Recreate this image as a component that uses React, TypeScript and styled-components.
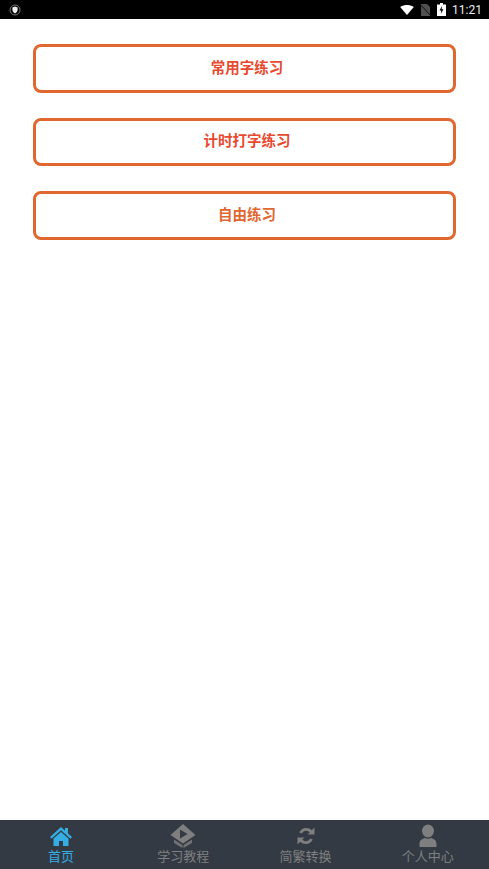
import React from "react";
import styled, { createGlobalStyle } from "styled-components";

const Global = createGlobalStyle`
  html, body { margin: 0; padding: 0; height: 100%; background: #fff; }
  #root { height: 100%; }
  * { box-sizing: border-box; }
`;

const Screen = styled.div`
  width: 489px;
  height: 869px;
  display: flex;
  flex-direction: column;
  font-family: "Roboto", "Noto Sans CJK SC", sans-serif;
  overflow: hidden;
`;

const StatusBar = styled.div`
  height: 19px;
  flex: none;
  background: #000;
  display: flex;
  align-items: center;
  justify-content: space-between;
  padding: 0 7px 0 9px;
`;

const StatusGroup = styled.div`
  display: flex;
  align-items: center;
  gap: 6px;
`;

const Clock = styled.span`
  color: #eeeeee;
  font-size: 12px;
  font-family: "Roboto", sans-serif;
  font-weight: 400;
`;

const Main = styled.main`
  flex: 1;
  background: #fff;
  padding: 25px 33px 0;
  display: flex;
  flex-direction: column;
  gap: 25px;
`;

const PracticeButton = styled.button<{ $color: string }>`
  height: 48.5px;
  border: 3px solid #e0672f;
  border-radius: 8px;
  background: #fff;
  color: ${(p) => p.$color};
  font: 700 14.5px "Noto Sans CJK SC", sans-serif;
  padding: 0 0 4px 5px;
`;

const TabBar = styled.nav`
  height: 49px;
  flex: none;
  background: #333a44;
  display: grid;
  grid-template-columns: repeat(4, 1fr);
`;

const Tab = styled.div<{ $active?: boolean }>`
  display: flex;
  flex-direction: column;
  align-items: center;
  color: ${(p) => (p.$active ? "#34aee3" : "#7f7f7f")};
  padding-top: 4px;
`;

const TabIcon = styled.svg`
  width: 26px;
  height: 24px;
  display: block;
  fill: currentColor;
`;

const TabLabel = styled.span`
  font: 400 13px/18px "Noto Sans CJK SC", sans-serif;
  margin-top: -1px;
`;

const buttons = [
  { label: "常用字练习", color: "#e8492f" },
  { label: "计时打字练习", color: "#e8492f" },
  { label: "自由练习", color: "#e0652f" },
];

export default function App() {
  return (
    <Screen>
      <Global />
      <StatusBar>
        <svg width="12" height="12" viewBox="0 0 12 12">
          <circle cx="6" cy="6" r="5" fill="none" stroke="#777" strokeWidth="1" />
          <path d="M3.4 3.4 6 2.6l2.6.8V6c0 1.6-1.2 2.7-2.6 3.4C4.600 8.700 3.400 7.600 3.400 6z" fill="#eee" />
        </svg>
        <StatusGroup>
          <svg width="14" height="10" viewBox="0 0 15 11">
            <path d="M0 2.200C4-.8 11-.8 15 2.200L7.500 11z" fill="#fff" />
          </svg>
          <svg width="11" height="12" viewBox="0 0 11 12">
            <path d="M1 0h6l3 3v9H1z" fill="#505050" />
            <path d="M0 0l11 12" stroke="#111" strokeWidth="1" />
          </svg>
          <svg width="9" height="13" viewBox="0 0 9 13">
            <path d="M3 0h3v1.500h3V13H0V1.500h3z" fill="#fff" />
            <path d="M5 3 2.500 7.500H4.300L3.800 11 6.500 6.300H4.700z" fill="#000" />
          </svg>
          <Clock>11:21</Clock>
        </StatusGroup>
      </StatusBar>
      <Main>
        {buttons.map((b) => (
          <PracticeButton key={b.label} $color={b.color}>
            {b.label}
          </PracticeButton>
        ))}
      </Main>
      <TabBar>
        <Tab $active>
          <TabIcon viewBox="0 0 26 24">
            <path d="M13 3 2 13l1.500 1.700L13 6.200l9.500 8.500L24 13l-4-3.600V4h-3v2.700z" />
            <path d="M13 8 5.500 14.600V22H11v-5h4v5h5.500v-7.400z" />
          </TabIcon>
          <TabLabel>首页</TabLabel>
        </Tab>
        <Tab>
          <TabIcon viewBox="0 0 26 24">
            <path d="M13 0 25.500 11 13 19.500.5 11z" />
            <path d="M4 15.500l8.500 5.500v3L4 19zM22 15.500 13.500 21v3L22 19z" opacity=".8" />
            <path d="M10 5.500 17.500 10 10 14.500z" fill="#333a44" />
          </TabIcon>
          <TabLabel>学习教程</TabLabel>
        </Tab>
        <Tab>
          <TabIcon viewBox="0 0 26 24">
            <path d="M13 4c-3 0-5.600 1.800-6.800 4.500L9 9.500C9.800 7.700 11.300 6.700 13 6.700c1.500 0 2.800.7 3.600 1.800L14.500 10.500H21.500V3.500L18.700 6.200C17.300 4.800 15.300 4 13 4z" />
            <path d="M13 20c3 0 5.600-1.800 6.800-4.500L17 14.500c-.8 1.800-2.300 2.800-4 2.800-1.500 0-2.800-.7-3.600-1.800l2.100-2H4.500v7l2.800-2.700C8.700 19.200 10.700 20 13 20z" />
          </TabIcon>
          <TabLabel>简繁转换</TabLabel>
        </Tab>
        <Tab>
          <TabIcon viewBox="0 0 26 24">
            <ellipse cx="13" cy="7" rx="6" ry="6.500" />
            <path d="M4.500 23v-3.500c0-3 3-5 5.500-5.500 1.800 1 4.200 1 6 0 2.500.5 5.500 2.500 5.500 5.500V23z" />
          </TabIcon>
          <TabLabel>个人中心</TabLabel>
        </Tab>
      </TabBar>
    </Screen>
  );
}
